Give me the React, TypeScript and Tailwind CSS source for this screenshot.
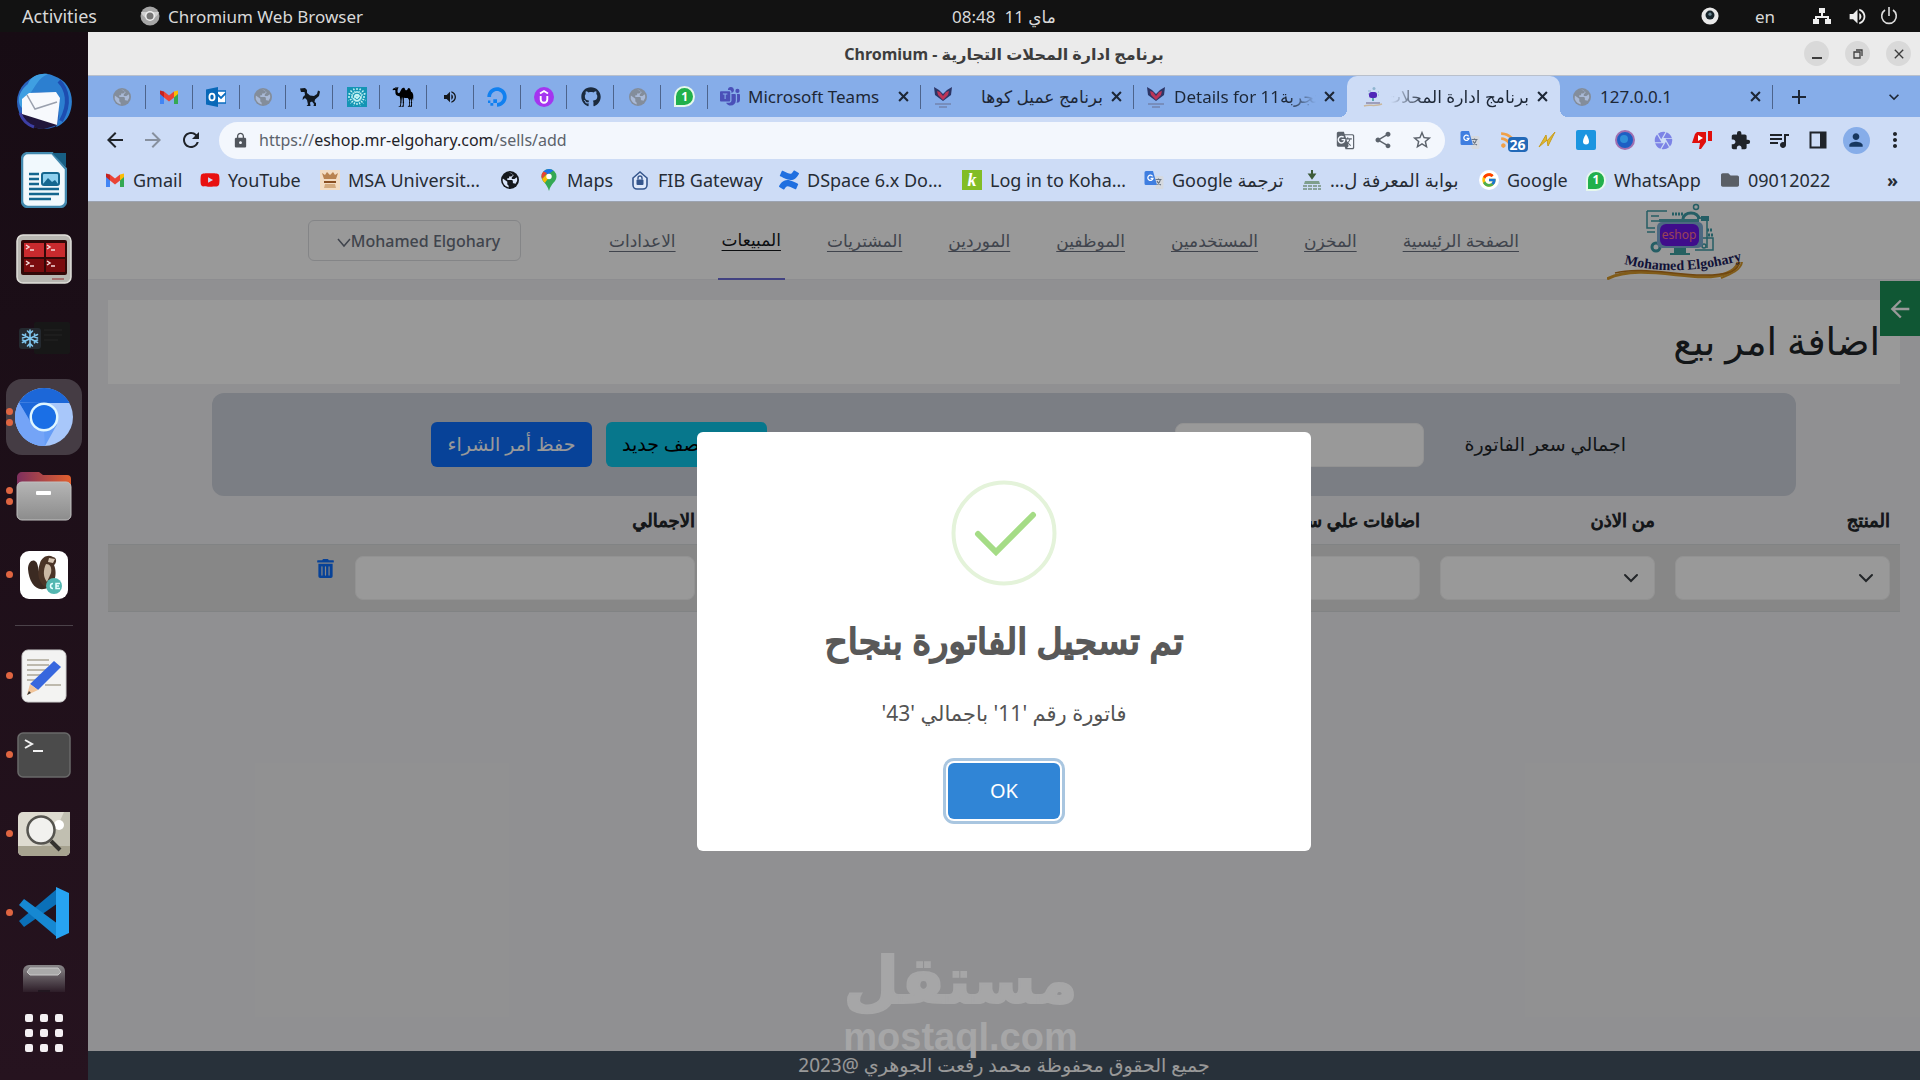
import React from 'react';
import { FaGithub, FaDigitalOcean, FaFolder, FaTrashAlt, FaYoutube, FaRss, FaConfluence } from 'react-icons/fa';
import { GiCamel } from 'react-icons/gi';
import {
  MdArrowBack, MdArrowForward, MdRefresh, MdGTranslate, MdShare, MdStarBorder, MdExtension, MdQueueMusic,
  MdMoreVert, MdPerson, MdClose, MdAdd, MdExpandMore, MdVolumeUp, MdCamera, MdLock,
} from 'react-icons/md';
import { FcGoogle } from 'react-icons/fc';
import { BsMicrosoftTeams } from 'react-icons/bs';

const Globe = ({ dark = false }: { dark?: boolean }) => (
  <svg viewBox="0 0 20 20" className={dark ? 'size-[18px] text-[#15181c]' : 'size-[18px] text-[#838d9b]'}>
    <circle cx="10" cy="10" r="10" fill="currentColor" />
    <path
      d="M2.500 8.500L7 12v2.500c0 1 1 1 1.500 2v1.800A8.300 8.300 0 012 8.500zM9 2c2 0 3 .4 4 1v1.500c0 1-1 1.500-2 1.500H9v2H7v2h5c1 0 1.200 1 1.200 2v1.500h1c.8 0 1.300.4 1.600 1C17 13 18 11.500 18 10c0-1-.2-2-.6-3L15 9h-3V7l2-2-1-2z"
      fill={dark ? '#dbe6fa' : '#a9b9d6'}
    />
  </svg>
);

const DinoIcon = () => (
  <svg viewBox="0 0 20 20" className="size-5" fill="#111820">
    <path d="M0 1.500L5 1l2 2v3l3 2.500 4 .5 3-2 1-3.500 2 1-1 4.500-4 3.500-.5 2.500 1.500 1v3h-2.500l.5-2-2-2.500-2 1 .5 3.500H6.500l1.500-1.500L7 13 5 11l-2.500 2L3 10l2-2-.5-3H1z" />
  </svg>
);

const CloseX = () => (
  <svg viewBox="0 0 10 10" className="size-[11px]" fill="none" stroke="currentColor" strokeWidth="1.900"><path d="M1 1l8 8M9 1L1 9" /></svg>
);

const GmailIcon = () => (
  <svg viewBox="0 0 20 16" className="w-5 h-4">
    <path d="M1 3v12h4V7z" fill="#4285f4" />
    <path d="M19 3v12h-4V7z" fill="#34a853" />
    <path d="M15 2.600L19 1.500V5l-4 3.500z" fill="#fbbc04" />
    <path d="M1 1.500l4 1v6L1 5z" fill="#c5221f" />
    <path d="M5 2.500l5 4 5-4v6l-5 4-5-4z" fill="#ea4335" />
  </svg>
);

const OutlookIcon = () => (
  <svg viewBox="0 0 20 20" className="size-5">
    <rect x="9" y="4" width="11" height="12" fill="#fff" stroke="#0a6cbf" strokeWidth="1.500" />
    <path d="M10 6l5 5 5-5" fill="none" stroke="#0a6cbf" strokeWidth="1.800" />
    <path d="M0 2.500L12 0v20L0 17.500z" fill="#0868b8" />
    <ellipse cx="6" cy="10" rx="2.600" ry="3.400" fill="none" stroke="#fff" strokeWidth="1.800" />
  </svg>
);

const SparkIcon = () => (
  <svg viewBox="0 0 20 20" className="size-5">
    <rect width="20" height="20" fill="#1495b4" />
    <g stroke="#c4f3f3" strokeWidth="1.400" strokeDasharray="2 1">
      <path d="M10 1v18M1 10h18M3.500 3.500l13 13M16.500 3.500l-13 13M6.500 1.500l7 17M13.500 1.500l-7 17M1.500 6.500l17 7M18.500 6.500l-17 7" />
    </g>
  </svg>
);

const UdemyIcon = () => (
  <svg viewBox="0 0 20 20" className="size-5">
    <circle cx="10" cy="10" r="10" fill="#a435f0" />
    <path d="M6 6.500L10 4l4 2.500M6.700 9v3.500a3.300 3.300 0 006.600 0V9" fill="none" stroke="#fff" strokeWidth="1.900" />
  </svg>
);

const WhatsIcon = () => (
  <span className="flex size-[21px] items-center justify-center rounded-full rounded-bl-sm border-2 border-[#e6f8ec] bg-[#21b04b] text-xs font-bold leading-none text-white">1</span>
);

const KohaIcon = () => (
  <svg viewBox="0 0 20 22" className="w-5 h-[22px]">
    <path d="M1 1l5 3 4 4 4-4 5-3-1 8-4 3-4 3-4-3-4-3z" fill="#2c3565" />
    <path d="M4 5l3 1 3 4 3-4 3-1-1 4-5 5-5-5z" fill="#bb3558" />
    <path d="M2 18h16M6 21h8" stroke="#7384ae" strokeWidth="1.400" />
  </svg>
);

const ShopIcon = () => (
  <svg viewBox="0 0 20 22" className="w-5 h-[22px]">
    <circle cx="11" cy="2.500" r="1.500" fill="#8fb5cf" />
    <path d="M5 5h3M5 8h1M15 6h1M15 9h1" stroke="#8fb5cf" />
    <rect x="6" y="6" width="8" height="6" rx="2.500" fill="#5127b8" />
    <path d="M10 12v3" stroke="#5da4ad" strokeWidth="2" />
    <path d="M3 17h14" stroke="#8c8aa8" strokeWidth="1.500" />
    <path d="M1 20c5-2 11 1 18-2" fill="none" stroke="#c9b79e" strokeWidth="1.500" />
  </svg>
);

const MsaIcon = () => (
  <svg viewBox="0 0 20 20" className="size-5">
    <rect width="20" height="20" fill="#f3dcc3" />
    <path d="M2 3l3 2 2-3 3 3 3-3 2 3 3-2-2 6H4z" fill="#b9824f" />
    <path d="M4 11h12v2H4z" fill="#8a4f22" />
    <path d="M5 14h10l1 4H4z" fill="#d4ab80" />
  </svg>
);

const MapsIcon = () => (
  <svg viewBox="0 0 16 22" className="h-[22px] w-4">
    <path d="M8 0a7.500 7.500 0 00-7.500 7.500C.5 13 6 14 8 22c2-8 7.500-9 7.500-14.500A7.500 7.500 0 008 0z" fill="#34a853" />
    <path d="M8 0a7.500 7.500 0 00-5.700 2.600L6 6l6.500-4.500A7.500 7.500 0 008 0z" fill="#1a73e8" />
    <path d="M2.300 2.600A7.500 7.500 0 001 10l5-6z" fill="#ea4335" />
    <path d="M1 10c.6 1.500 1.600 2.700 2.700 3.900L10 6 6 5z" fill="#fbbc04" />
    <circle cx="8" cy="7.500" r="2.700" fill="#fff" />
  </svg>
);

const FibIcon = () => (
  <svg viewBox="0 0 20 20" className="size-5">
    <path d="M3 8l7-6 7 6v7a4 4 0 01-4 4H7a4 4 0 01-4-4z" fill="#dfe9fb" stroke="#35568d" strokeWidth="1.600" />
    <rect x="6.500" y="9.500" width="7" height="5.500" rx="1" fill="#35568d" />
    <path d="M8 9.500V8a2 2 0 014 0v1.500" fill="none" stroke="#35568d" strokeWidth="1.400" />
  </svg>
);

const KIcon = () => (
  <span className="flex h-5 w-5 items-center justify-center bg-[#82bd25] font-['Liberation_Serif'] text-lg font-bold italic leading-none text-white">k</span>
);

const TranslateIcon = () => (
  <svg viewBox="0 0 20 20" className="size-5">
    <path d="M9 6h9a1.500 1.500 0 011.500 1.500v10A1.500 1.500 0 0118 19h-6z" fill="#d5d9df" />
    <path d="M11.500 9.500h6M14.500 8.500v1M16.500 9.500c-.5 2.500-2 4-3.500 5M13 11c1 2 2.500 3.500 4 4" fill="none" stroke="#6b7684" strokeWidth="1.200" />
    <path d="M2 1h7l4 14H2a1.500 1.500 0 01-1.500-1.500v-11A1.500 1.500 0 012 1z" fill="#3f7ee0" />
    <path d="M8.600 6.300A2.600 2.600 0 109 8.300H6.600" fill="none" stroke="#fff" strokeWidth="1.300" />
  </svg>
);

const BankIcon = () => (
  <svg viewBox="0 0 20 20" className="size-5">
    <path d="M10 0v6M7.500 4.500L10 8l2.500-3.500z" fill="#3e5b39" stroke="#3e5b39" strokeWidth="2" />
    <path d="M3 11h14l1 3H2z" fill="#7f9f8c" />
    <path d="M1 16h18M1 19h18" stroke="#8aa39a" strokeWidth="2" strokeDasharray="4 1" />
  </svg>
);

const smallTabs: [string, React.ReactNode][] = [
  ['Site', <Globe />],
  ['Gmail', <GmailIcon />],
  ['Outlook', <OutlookIcon />],
  ['Site', <Globe />],
  ['Dinosaur', <DinoIcon />],
  ['Spark', <SparkIcon />],
  ['Camel', <GiCamel className="size-[22px] -scale-x-100 text-black" />],
  ['Sound', <MdVolumeUp className="size-4 text-[#14181d]" />],
  ['DigitalOcean', <FaDigitalOcean className="size-5 text-[#1080f0]" />],
  ['Udemy', <UdemyIcon />],
  ['GitHub', <FaGithub className="size-5 text-[#1b2a3d]" />],
  ['Site', <Globe />],
  ['WhatsApp', <WhatsIcon />],
];

const bookmarks: [string, string, React.ReactNode][] = [
  ['Gmail', 'w-[95px]', <GmailIcon />],
  ['YouTube', 'w-[120px]', <FaYoutube className="size-5 text-[#e81010]" />],
  ['MSA Universit…', 'w-[180px]', <MsaIcon />],
  ['', 'w-[39px]', <Globe dark />],
  ['Maps', 'w-[91px]', <MapsIcon />],
  ['FIB Gateway', 'w-[149px]', <FibIcon />],
  ['DSpace 6.x Do…', 'w-[183px]', <FaConfluence className="size-5 text-[#1f6fe0]" />],
  ['Log in to Koha…', 'w-[182px]', <KIcon />],
  ['Google ترجمة', 'w-[158px]', <TranslateIcon />],
  ['بوابة المعرفة ل…', 'w-[177px]', <BankIcon />],
  ['Google', 'w-[107px]', <span className="flex size-5 items-center justify-center rounded-full bg-white"><FcGoogle className="size-4" /></span>],
  ['WhatsApp', 'w-[134px]', <WhatsIcon />],
  ['09012022', 'w-[110px]', <FaFolder className="size-[18px] text-[#5a5f66]" />],
];

const tabText = 'min-w-0 flex-1 overflow-hidden whitespace-nowrap';

function Tab({ icon, title, fade = false, rtl = false, active = false, line = false }: { icon: React.ReactNode; title: string; fade?: boolean; rtl?: boolean; active?: boolean; line?: boolean }) {
  return (
    <div className={active ? 'relative flex w-[213px] items-center gap-2 rounded-t-[10px] bg-[#cddcf6] pl-4 pr-3' : 'relative flex w-[213px] items-center gap-2 pl-3 pr-3'}>
      {active && <span className="absolute -left-2 bottom-0 size-2 bg-[radial-gradient(circle_at_0_0,transparent_8px,#cddcf6_8px)]" />}
      {active && <span className="absolute -right-2 bottom-0 size-2 bg-[radial-gradient(circle_at_100%_0,transparent_8px,#cddcf6_8px)]" />}
      <span className="flex w-5 shrink-0 justify-center">{icon}</span>
      <span
        dir={rtl ? 'rtl' : 'ltr'}
        className={
          !fade
            ? tabText
            : rtl
              ? tabText + ' [mask-image:linear-gradient(to_left,black_75%,transparent)]'
              : tabText + ' [mask-image:linear-gradient(to_right,black_80%,transparent)]'
        }
      >
        {title}
      </span>
      <button aria-label="Close tab" className="shrink-0"><CloseX /></button>
      {line && <span className="absolute right-0 top-[9px] h-6 w-px bg-[#4d648c]" />}
    </div>
  );
}

/* ---- dock ---- */

const dockTop: [string, number, React.ReactNode][] = [
  ['Thunderbird', 0, (
    <svg viewBox="0 0 60 60" className="size-[60px]">
      <circle cx="30" cy="31" r="27" fill="#2a63bd" />
      <path d="M5 42A27 27 0 0030 58l14-4-4-12z" fill="#20153a" />
      <path d="M14 13C18 4 30 0 40 5 56 10 62 28 55 44c-3 6-8 10-13 12 4-8 5-18-2-28C34 20 24 20 14 24z" fill="#2c7fd0" />
      <path d="M14 13c2-7 10-11 20-10C24 7 22 15 15 24c-4 4-7 8-7 13C1 29 7 18 14 13z" fill="#3f9fe2" />
      <path d="M45 10c8 8 12 22 2 40" stroke="#1d4db0" strokeWidth="4" fill="none" />
      <path d="M8 28l7-6 27-1 4 6-3 27L8 43z" fill="#f7f9fd" />
      <path d="M13 24l8 14 22-7" fill="none" stroke="#9aa0ae" strokeWidth="1.500" />
      <path d="M6 42c3 8 8 12 14 14" stroke="#3d3fa5" strokeWidth="3" fill="none" />
    </svg>
  )],
  ['LibreOffice Writer', 0, (
    <svg viewBox="0 0 46 56" className="h-14 w-[46px]">
      <path d="M7 1h24l14 16v32a6 6 0 01-6 6H7a6 6 0 01-6-6V7a6 6 0 016-6z" fill="#f1f9fd" stroke="#4289ae" strokeWidth="2.500" />
      <path d="M31 1h14v14z" fill="#175e83" />
      <g stroke="#15678f" strokeWidth="2.500">
        <path d="M8 22h10M8 27h10M8 32h10M8 37h30M8 42h30M8 47h22" />
      </g>
      <rect x="21" y="21" width="17" height="12" rx="2" fill="#8ed0ee" stroke="#15678f" strokeWidth="2" />
      <path d="M22 32l5-6 4 4 3-2 3 4z" fill="#15678f" />
    </svg>
  )],
  ['Terminator', 0, (
    <svg viewBox="0 0 56 50" className="h-[50px] w-14">
      <rect x="1" y="1" width="54" height="48" rx="6" fill="#b8b7b2" stroke="#e0dfda" strokeWidth="1.500" />
      <rect x="5" y="6" width="46" height="35" rx="2" fill="#320808" />
      <path d="M8 9h20v14H8zM30 9h19v14H30z" fill="#c92a2e" />
      <path d="M8 25h20v13H8zM30 25h19v13H30z" fill="#7a0b0e" />
      <g fill="none" stroke="#f4dada" strokeWidth="1.500">
        <path d="M10 11l3 2-3 2M14 16h4M31 11l3 2-3 2M35 16h4M10 27l3 2-3 2M14 32h4M31 27l3 2-3 2M35 32h4" />
      </g>
      <path d="M36 45h12" stroke="#a05a5a" strokeWidth="1.500" />
    </svg>
  )],
  ['Freeze', 0, (
    <svg viewBox="0 0 52 32" className="h-8 w-[52px]">
      <rect x="16" y="0" width="36" height="32" rx="2" fill="#171717" />
      <path d="M26 8h18M26 13h18M26 18h14" stroke="#242424" />
      <rect x="1" y="6" width="22" height="21" rx="3" fill="#24292f" />
      <g stroke="#7fc4ec" strokeWidth="1.600" fill="none" strokeLinecap="round">
        <path d="M12 8v17M4.500 12.500l15 8M19.500 12.500l-15 8M9.500 9l2.500 2.500L14.500 9M9.500 24l2.500-2.500 2.500 2.500M4.500 16l3-1v-3M19.500 16l-3-1v-3M4.500 18l3 1v2M19.500 18l-3 1v2" />
      </g>
    </svg>
  )],
  ['Chromium', 2, (
    <svg viewBox="0 0 58 58" className="size-[58px]">
      <circle cx="29" cy="29" r="29" fill="#a8c7fa" />
      <path d="M4 14.500A29 29 0 0030 58l12-21.500z" fill="#669df6" />
      <path d="M4 14.500A29 29 0 0154.500 15H29z" fill="#1c67d8" />
      <path d="M4 14.500L17 36l12-21z" fill="#1c67d8" />
      <path d="M4 14.500l12.500 22A14 14 0 0029 43l1 15A29 29 0 014 14.500z" fill="#74a4f7" />
      <circle cx="29" cy="29" r="14.500" fill="#dff6ff" />
      <circle cx="29" cy="29" r="12" fill="#1a6fe6" />
    </svg>
  )],
  ['Files', 2, (
    <svg viewBox="0 0 56 50" className="h-[50px] w-14">
      <defs>
        <linearGradient id="fold"><stop stopColor="#7d2f5e" /><stop offset="1" stopColor="#e2602e" /></linearGradient>
        <linearGradient id="drawer" x2="0" y2="1"><stop stopColor="#b5b5b5" /><stop offset="1" stopColor="#8c8c8c" /></linearGradient>
      </defs>
      <path d="M6 1h17l4 3h24a4 4 0 014 4v14H1V6a5 5 0 015-5z" fill="url(#fold)" />
      <rect x="1" y="11" width="54" height="38" rx="5" fill="url(#drawer)" stroke="#c0c0c0" />
      <rect x="20" y="20" width="15" height="4" rx="1" fill="#fff" />
    </svg>
  )],
  ['DBeaver', 1, (
    <svg viewBox="0 0 48 48" className="size-12">
      <rect width="48" height="48" rx="9" fill="#fff" />
      <path d="M8 18c0-10 9-12 10-2 1 9 6 14 11 20-12 7-20-4-21-18z" fill="#3b2a22" />
      <path d="M20 12c2-6 8-9 13-6 5 1 3 7 1 8 4 9 0 22-7 23-8-4-11-14-7-25z" fill="#4b3427" />
      <path d="M26 13c4 0 6 3 5 9l-4 9c-4-5-4-12-1-18z" fill="#cbb9a5" />
      <path d="M29 7l6 1-2 4-5-1z" fill="#d8c6b4" />
      <circle cx="34" cy="35" r="8" fill="#54b7b1" />
      <path d="M33 32.500a2.500 2.500 0 100 5M40 32.500h-4v5h4M36 35h3" stroke="#e8ffff" strokeWidth="1.500" fill="none" />
    </svg>
  )],
];

const dockBottom: [string, number, React.ReactNode][] = [
  ['Text Editor', 1, (
    <svg viewBox="0 0 46 54" className="h-[54px] w-[46px]">
      <rect x="1" y="1" width="44" height="52" rx="6" fill="#f3f3f2" stroke="#cfcfcf" />
      <path d="M6 11h22M6 16h22M6 21h22M6 26h20M6 31h14M24 36h16" stroke="#bdb9ad" strokeWidth="2" />
      <path d="M33 12l7 6-23 23-8-6z" fill="#3767de" />
      <path d="M9 35l8 6-11 5z" fill="#f0c49a" />
      <path d="M8 42l2 2-4 2z" fill="#333" />
    </svg>
  )],
  ['Terminal', 1, (
    <svg viewBox="0 0 54 46" className="h-[46px] w-[54px]">
      <rect x="1" y="1" width="52" height="44" rx="5" fill="#4b4b4b" stroke="#6a6a6a" strokeWidth="1.500" />
      <path d="M8 8l7 4-7 4M16 19h10" fill="none" stroke="#f2f2f2" strokeWidth="2" />
    </svg>
  )],
  ['Image Viewer', 1, (
    <svg viewBox="0 0 54 46" className="h-[46px] w-[54px]">
      <rect x="1" y="1" width="52" height="44" rx="5" fill="#dedbd0" />
      <path d="M24 35C36 26 42 12 47 1h6v34z" fill="#c1bfb1" />
      <path d="M1 35h52v5a5 5 0 01-5 5H6a5 5 0 01-5-5z" fill="#a7a390" />
      <circle cx="42" cy="14" r="5" fill="#fff" />
      <path d="M34 30l9 9" stroke="#34332f" strokeWidth="4" />
      <circle cx="24" cy="19" r="13.500" fill="#f1f1ee" stroke="#55544f" strokeWidth="2.500" />
    </svg>
  )],
  ['Visual Studio Code', 1, (
    <svg viewBox="0 0 52 52" className="size-[52px]">
      <path d="M1 34l5 6L40 16V1z" fill="#0b70b8" />
      <path d="M1 18l5-6 34 25v14z" fill="#1688d2" />
      <path d="M38 0l13 6v40l-13 6z" fill="#27a3f2" />
    </svg>
  )],
];

function DockItem({ label, dots, children, active = false }: { label: string; dots: number; children: React.ReactNode; active?: boolean }) {
  return (
    <button aria-label={label} className="relative flex h-[79px] w-full items-center justify-center">
      <span className={active ? 'flex size-[76px] items-center justify-center rounded-2xl bg-[#453c44]' : 'flex size-[76px] items-center justify-center'}>{children}</span>
      <span className="absolute inset-y-0 left-1.5 flex flex-col justify-center gap-1">
        {Array.from({ length: dots }, (_, i) => <span key={i} className="size-[7px] rounded-full bg-[#df6541]" />)}
      </span>
    </button>
  );
}

const ShopLogo = () => (
  <svg viewBox="0 0 136 78" direction="ltr" className="h-[78px] w-[136px] shrink-0" role="img" aria-label="eshop Mohamed Elgohary">
    <g fill="none" stroke="#3f9da8" strokeWidth="1.500">
      <path d="M40 9h20M40 9v17h8M44 14h8M44 19h8M90 16h10v30M40 30h8M92 36h14v12H88" />
      <path d="M76 17a8 6 0 0116 0" strokeWidth="3" />
      <circle cx="89" cy="5" r="2.500" />
      <circle cx="49" cy="45" r="4" strokeWidth="3" />
      <circle cx="97" cy="44" r="2" />
      <path d="M65 12h11" strokeDasharray="2 1" strokeWidth="3" />
      <path d="M100 28h6M101 33h6" strokeDasharray="2 1" strokeWidth="3" />
    </g>
    <path d="M94 14h8v5h-8z" fill="#3f9da8" />
    <rect x="52" y="17" width="40" height="3" fill="#4fa5b3" />
    <rect x="50" y="20" width="46" height="26" rx="5" fill="#7fb0d8" />
    <rect x="53" y="22" width="39" height="22" rx="6" fill="#6a17e8" />
    <path d="M67 46h12v5h4v2H63v-2h4z" fill="#3ea3a3" />
    <text x="72" y="37" textAnchor="middle" fontSize="12" fontFamily="Noto Sans" fill="#ff6f91">eshop</text>
    <defs><path id="arc" d="M17 62Q72 76 136 58" /></defs>
    <path d="M0 77C34 60 90 82 118 72c8-3 12-6 13-12" fill="none" stroke="#d89a2b" strokeWidth="3" />
    <path d="M8 71C40 62 90 80 124 70c6-3 8-6 9-10" fill="none" stroke="#bb761b" strokeWidth="1.500" />
    <path d="M114 76c10-4 20-8 21-16" fill="none" stroke="#d89a2b" strokeWidth="2" />
    <text fontSize="14" fontFamily="Liberation Serif" fontWeight="bold" fill="#1d1d5c"><textPath href="#arc">Mohamed Elgohary</textPath></text>
  </svg>
);

const links = ['الصفحة الرئيسية', 'المخزن', 'المستخدمين', 'الموظفين', 'الموردين', 'المشتريات', 'المبيعات', 'الاعدادات'];

const field = 'block h-11 w-full rounded-lg border border-[#f4f4f4] bg-white px-3';

function PageSelect({ label }: { label: string }) {
  return (
    <div className="relative">
      <select aria-label={label} className={field + ' appearance-none'} />
      <svg viewBox="0 0 16 16" className="pointer-events-none absolute right-4 top-3.5 size-4" fill="none" stroke="#3a3f44" strokeWidth="2" strokeLinecap="round"><path d="M2 5l6 6 6-6" /></svg>
    </div>
  );
}

export default function App() {
  return (
    <div className="flex min-h-screen flex-col overflow-hidden bg-[#1a0e17] font-['Noto_Sans','DejaVu_Sans',sans-serif]">
      <header className="grid h-8 grid-cols-3 items-center bg-[#121212] px-[22px] text-[17px] leading-none text-[#d9d9d9]">
        <div className="flex items-center">
          <button className="w-[118px] text-left text-lg leading-none">Activities</button>
          <button className="flex items-center gap-2 whitespace-nowrap">
            <svg viewBox="0 0 20 20" className="size-5">
              <circle cx="10" cy="10" r="9.500" fill="#a6a6a6" />
              <path d="M1 6a9.500 9.500 0 0018 0z" fill="#d0d0d0" />
              <circle cx="10" cy="10" r="5" fill="#eee" /><circle cx="10" cy="10" r="3.500" fill="#757575" />
            </svg>
            Chromium Web Browser
          </button>
        </div>
        <button dir="rtl" className="ml-[88px] whitespace-pre">ماي 11  08:48</button>
        <div className="flex items-center justify-end">
          <svg viewBox="0 0 20 20" className="mr-9 size-[18px]"><circle cx="10" cy="10" r="9.500" fill="#e9e9e9" /><circle cx="10" cy="9" r="5" fill="#17242b" /><circle cx="10" cy="8" r="1.800" fill="#6c8792" /></svg>
          <span className="mr-[38px]">en</span>
          <svg viewBox="0 0 18 18" className="mr-4 size-[18px]" fill="#eee"><path d="M6 1h6v5H6zM0 12h6v5H0zM12 12h6v5h-6zM8 6h2v3h6v3h-2v-1H4v1H2V9h6z" /></svg>
          <MdVolumeUp className="mr-3 size-[21px] text-[#eee]" />
          <svg viewBox="0 0 18 18" className="size-[18px]" fill="none" stroke="#ddd" strokeWidth="1.600"><path d="M9 0v9M5 3a7.300 7.300 0 108 0" /></svg>
        </div>
      </header>

      <div className="flex flex-1">
        <aside className="flex w-[88px] shrink-0 flex-col items-center bg-linear-to-b from-[#170c14] to-[#26131f] pt-[29px]">
          {dockTop.map(([label, dots, icon]) => (
            <DockItem key={label} label={label} dots={dots} active={label === 'Chromium'}>{icon}</DockItem>
          ))}
          <hr className="mb-2.5 mt-[11px] w-[58px] border-[#4b4249]" />
          {dockBottom.map(([label, dots, icon]) => (
            <DockItem key={label} label={label} dots={dots}>{icon}</DockItem>
          ))}
          <svg viewBox="0 0 44 28" className="mt-3 h-7 w-11">
            <defs><linearGradient id="disk" x2="0" y2="1"><stop stopColor="#8a888a" /><stop offset="1" stopColor="#2d1d28" /></linearGradient></defs>
            <path d="M7 1h30a6 6 0 016 6v21H1V7a6 6 0 016-6z" fill="url(#disk)" />
            <path d="M8 4h28l3 4-3 3H8L5 8z" fill="#aaa" stroke="#c9c9c9" />
            <path d="M16 28v-2h12v2z" fill="#221720" />
          </svg>
          <button aria-label="Show applications" className="mt-[22px] grid grid-cols-3 gap-[7px]">
            {Array.from({ length: 9 }, (_, i) => <span key={i} className="size-2 rounded-[2px] bg-[#f4f0f3]" />)}
          </button>
        </aside>

        <section className="flex min-w-0 flex-1 flex-col">
          <div className="relative flex h-11 items-center justify-center border-b border-[#b9c0cc] bg-[#ebebeb] text-[#3d3d3d]">
            <h2 dir="rtl" className="text-base font-bold">برنامج ادارة المحلات التجارية - Chromium</h2>
            <div className="absolute right-[9px] flex gap-4">
              <button aria-label="Minimize" className="flex size-[25px] items-center justify-center rounded-full bg-[#d9d9d9]"><span className="mt-2 h-0.5 w-2.5 bg-[#3d3d3d]" /></button>
              <button aria-label="Restore" className="flex size-[25px] items-center justify-center rounded-full bg-[#d9d9d9]">
                <svg viewBox="0 0 10 10" className="size-2.5" fill="none" stroke="#3d3d3d" strokeWidth="1.300"><path d="M1 3h6v6H1zM3 1h6v6" /></svg>
              </button>
              <button aria-label="Close" className="flex size-[25px] items-center justify-center rounded-full bg-[#d9d9d9]"><MdClose className="size-4" /></button>
            </div>
          </div>

          <nav aria-label="Tabs" className="flex h-[41px] bg-[#86ade9] pl-[11px] text-[17px] text-[#1d2736]">
            <div className="grid w-[609px] grid-cols-[repeat(13,1fr)]">
              {smallTabs.map(([label, icon], i) => (
                <button key={i} aria-label={label} className="relative flex items-center justify-center">
                  {icon}
                  <span className="absolute right-0 top-[9px] h-6 w-px bg-[#4d648c]" />
                </button>
              ))}
            </div>
            <Tab icon={<BsMicrosoftTeams className="size-5 text-[#4a50b8]" />} title="Microsoft Teams" line />
            <Tab icon={<KohaIcon />} title="برنامج عميل كوها" rtl line />
            <Tab icon={<KohaIcon />} title="Details for تجربة11" fade />
            <Tab icon={<ShopIcon />} title="برنامج ادارة المحلات التجارية" rtl active fade />
            <Tab icon={<Globe />} title="127.0.0.1" line />
            <button aria-label="New tab" className="ml-3.5"><MdAdd className="size-6" /></button>
            <button aria-label="Search tabs" className="ml-auto mr-4"><MdExpandMore className="size-5" /></button>
          </nav>

          <div className="flex h-[46px] items-center bg-[#cddcf6] text-[#1f2329]">
            <button aria-label="Back" className="ml-[15px]"><MdArrowBack className="size-6" /></button>
            <button aria-label="Forward" className="ml-3.5 text-[#87909e]"><MdArrowForward className="size-6" /></button>
            <button aria-label="Reload" className="ml-3.5"><MdRefresh className="size-6" /></button>
            <div className="ml-4 flex h-[37px] min-w-0 flex-1 items-center rounded-full bg-[#f3f7fd] pl-[13px] pr-3 text-base text-[#5c636c]">
              <MdLock className="mr-2.5 size-[17px] shrink-0 text-[#50555c]" />
              <span className="flex-1 whitespace-nowrap">https://<span className="text-[#1f2329]">eshop.mr-elgohary.com</span>/sells/add</span>
              <button aria-label="Translate" className="mr-[18px]"><MdGTranslate className="size-[19px]" /></button>
              <button aria-label="Share" className="mr-[18px]"><MdShare className="size-5" /></button>
              <button aria-label="Bookmark"><MdStarBorder className="size-[22px]" /></button>
            </div>
            <div className="ml-1.5 mr-1.5 grid w-[463px] grid-cols-12 *:flex *:items-center *:justify-center">
              <button aria-label="Google Translate"><TranslateIcon /></button>
              <button aria-label="RSS" className="relative">
                <FaRss className="size-[18px] text-[#f0a047]" />
                <span className="absolute left-[18px] top-2.5 rounded-sm bg-[#2269b8] px-0.5 text-sm font-bold leading-[15px] text-white">26</span>
              </button>
              <button aria-label="Lightning"><svg viewBox="0 0 20 20" className="size-5"><path d="M2 17L9 5l1 6 8-9-7 14-1-6z" fill="#e0b92f" stroke="#c79c1e" strokeWidth="1" strokeLinejoin="round" /></svg></button>
              <button aria-label="Drop">
                <svg viewBox="0 0 20 20" className="size-5"><rect width="20" height="20" rx="2" fill="#1b95e0" /><path d="M10 4c2 3.500 3 5.500 3 7.500a3 3 0 01-6 0C7 9.500 8 7.500 10 4z" fill="#fff" /></svg>
              </button>
              <button aria-label="Orb"><svg viewBox="0 0 20 20" className="size-5"><circle cx="10" cy="10" r="9" fill="#1d5fc4" stroke="#a06fb0" strokeWidth="2" /><circle cx="9" cy="9" r="4" fill="#2f8fd8" /></svg></button>
              <button aria-label="Aperture"><MdCamera className="size-[21px] text-[#7c83e6]" /></button>
              <button aria-label="Dislike">
                <svg viewBox="0 0 20 20" className="size-5"><path d="M5 2h9v10l-5 7H7l1-6H0l3-9zM16 1h4v10h-4z" fill="#e00f0c" /><path d="M6 5l5 3-5 3z" fill="#fff" /></svg>
              </button>
              <button aria-label="Extensions"><MdExtension className="size-[21px]" /></button>
              <button aria-label="Media"><MdQueueMusic className="size-6" /></button>
              <button aria-label="Side panel"><svg viewBox="0 0 18 18" className="size-[18px]"><path d="M1.500 1.500h15v15h-15z" fill="none" stroke="#1f2329" strokeWidth="2" /><path d="M11 1h6v16h-6z" fill="#1f2329" /></svg></button>
              <button aria-label="Profile"><span className="flex size-[27px] items-center justify-center rounded-full bg-[#86ade9]"><MdPerson className="size-5 text-[#17375f]" /></span></button>
              <button aria-label="Menu"><MdMoreVert className="size-6" /></button>
            </div>
          </div>

          <nav aria-label="Bookmarks" className="flex h-[39px] items-center border-b border-[#9ca3b0] bg-[#cddcf6] pb-1 pl-[17px] text-lg text-[#262c35]">
            {bookmarks.map(([label, width, icon], i) => (
              <a key={i} href="#" aria-label={label || 'Bookmark'} className={'flex shrink-0 items-center gap-2 whitespace-nowrap ' + width}>
                <span className="flex w-5 shrink-0 justify-center">{icon}</span>
                <bdi>{label}</bdi>
              </a>
            ))}
            <button aria-label="More bookmarks" className="ml-auto mr-[22px] font-bold">»</button>
          </nav>

          <main dir="rtl" className="relative flex flex-1 flex-col bg-[#f1f1f4] text-[#212529]">
            <div className="flex h-[78px] items-center justify-between border-b border-[#ececf0] bg-white pl-[220px] pr-[177px]">
              <ShopLogo />
              <nav className="flex gap-[38px] self-stretch text-[17px]">
                {links.map((text) => (
                  <a
                    key={text}
                    href="#"
                    className={
                      text === 'المبيعات'
                        ? '-mb-px flex items-center whitespace-nowrap border-b-2 border-[#6f6fd8] px-1 text-[#15181c] underline underline-offset-4'
                        : 'flex items-center whitespace-nowrap px-1 text-[#6b7280] underline underline-offset-4'
                    }
                  >
                    {text}
                  </a>
                ))}
              </nav>
              <button className="flex h-[41px] w-[213px] items-center justify-center rounded-md border border-[#dcdee2] pl-2 text-base font-medium text-[#6b7280]">
                Mohamed Elgohary
                <svg viewBox="0 0 14 10" className="mt-1 h-2.5 w-3.5" fill="none" stroke="currentColor" strokeWidth="1.500"><path d="M1 1l6 7 6-7" /></svg>
              </button>
            </div>

            <h1 className="mx-5 mt-5 flex h-[84px] items-center bg-white px-5 pb-1 text-[38px] leading-none">اضافة امر بيع</h1>

            <div className="mx-[124px] mt-[9px] flex h-[103px] items-center justify-between rounded-xl bg-[#cdd2dc] pl-[219px] pr-[170px] text-[19px]">
              <div className="flex items-center gap-10">
                <label htmlFor="total" className="whitespace-nowrap">اجمالي سعر الفاتورة</label>
                <div className="w-[249px]"><input id="total" className={field} /></div>
              </div>
              <div className="flex gap-3.5">
                <button className="h-[45px] w-[161px] whitespace-nowrap rounded-md bg-[#0dc6ea] text-black">اضافة صف جديد</button>
                <button className="h-[45px] w-[161px] whitespace-nowrap rounded-md bg-[#0d6efd] text-white">حفظ أمر الشراء</button>
              </div>
            </div>

            <div className="mx-5">
              <table className="w-full table-fixed text-right text-lg">
                <thead>
                  <tr className="h-12 *:px-2.5 *:font-normal *:[-webkit-text-stroke:1px]">
                    <th className="w-[235px]">المنتج</th>
                    <th className="w-[235px]">من الاذن</th>
                    <th className="w-[360px]">اضافات علي سعر المنتج</th>
                    <th>الكمية</th>
                    <th className="w-[360px]">الاجمالي</th>
                    <th className="w-[237px]" aria-label="حذف" />
                  </tr>
                </thead>
                <tbody>
                  <tr className="h-[67px] border-y border-[#d8dadd] bg-[#e2e2e2] *:px-2.5">
                    <td><PageSelect label="المنتج" /></td>
                    <td><PageSelect label="من الاذن" /></td>
                    <td><input aria-label="اضافات علي سعر المنتج" className={field} /></td>
                    <td><input aria-label="الكمية" className={field} /></td>
                    <td><input aria-label="الاجمالي" className={field} /></td>
                    <td className="align-top"><button aria-label="حذف" className="mt-3.5 block"><FaTrashAlt className="size-[19px] text-[#0d6efd]" /></button></td>
                  </tr>
                </tbody>
              </table>
            </div>

            <footer className="mt-auto flex h-[29px] items-center justify-center bg-[#445261] text-[19px] leading-none text-white">جميع الحقوق محفوظة محمد رفعت الجوهري @2023</footer>

            <button aria-label="رجوع" className="absolute right-0 top-[79px] flex h-[55px] w-10 items-center justify-center bg-[#1c9158] text-white"><MdArrowBack className="size-7" /></button>

            <div className="absolute inset-0 flex items-center justify-center bg-black/40">
              <div role="dialog" aria-labelledby="done" className="flex h-[419px] w-[614px] flex-col items-center rounded-md bg-white text-[#545454]">
                <svg viewBox="0 0 106 106" className="mt-12 size-[106px] shrink-0" fill="none">
                  <circle cx="53" cy="53" r="50.500" stroke="#e4f3da" strokeWidth="4" />
                  <path d="M27 54l18 18 37-37" stroke="#a5dc86" strokeWidth="6" strokeLinecap="round" />
                </svg>
                <h2 id="done" className="mt-[30px] text-4xl font-normal leading-[50px] text-[#595959] [-webkit-text-stroke:2px]">تم تسجيل الفاتورة بنجاح</h2>
                <p className="mt-[33px] text-[21px] leading-7">فاتورة رقم '11' باجمالي '43'</p>
                <button className="mt-9 h-14 w-28 shrink-0 rounded-md bg-[#3085d6] text-xl text-white ring-[3px] ring-[#a9c6e0] ring-offset-2">OK</button>
              </div>
            </div>

            <div aria-hidden="true" className="pointer-events-none absolute inset-x-0 bottom-5 flex justify-center pr-[87px] text-[#a6a6a7]">
              <div className="flex w-[230px] flex-col items-center font-bold">
                <span className="text-[64px] leading-[70px] [-webkit-text-stroke:2px_#a6a6a7]">مستقل</span>
                <span className="font-['Liberation_Sans'] text-[38px] leading-[46px]">mostaql.com</span>
              </div>
            </div>
          </main>
        </section>
      </div>
    </div>
  );
}
